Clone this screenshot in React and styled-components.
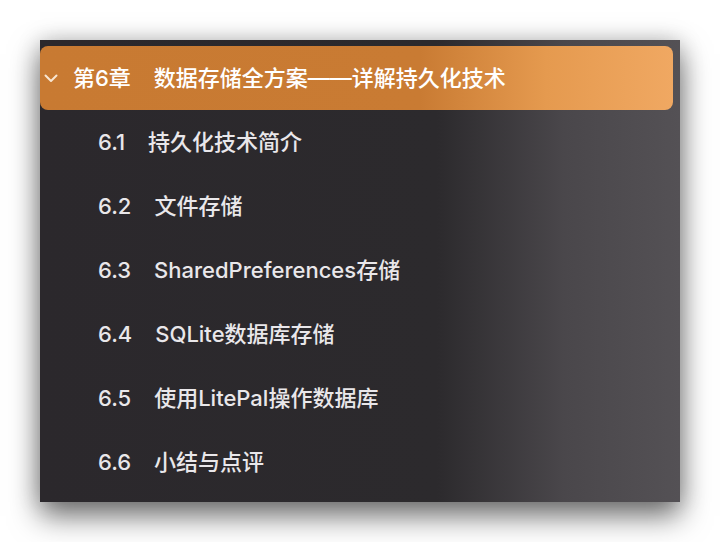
import styled, { createGlobalStyle } from "styled-components";

const GlobalStyle = createGlobalStyle`
  html, body {
    margin: 0;
    padding: 0;
    background: #ffffff;
  }
  body {
    font-family: Inter, "Noto Sans CJK SC", sans-serif;
  }
`;

const Page = styled.div`
  width: 720px;
  height: 542px;
  padding: 40px 0 0 40px;
  box-sizing: border-box;
  overflow: hidden;
`;

const Panel = styled.ul`
  width: 640px;
  margin: 0;
  padding: 6px 7px 8px 0;
  box-sizing: border-box;
  list-style: none;
  background: linear-gradient(
    to right,
    #2b282c 0%,
    #2c2a2d 62%,
    #4a474b 82%,
    #545155 100%
  );
  box-shadow: 0 14px 28px rgba(0, 0, 0, 0.55), 0 0 22px rgba(0, 0, 0, 0.18);
`;

const ChapterRow = styled.li`
  display: flex;
  align-items: center;
  height: 64px;
  padding-left: 4px;
  border-radius: 8px;
  background: linear-gradient(
    to right,
    #c87a32 0%,
    #c97b33 60%,
    #e59a4f 80%,
    #f0a862 100%
  );
  color: #ffffff;
  font-size: 22px;
  font-weight: 500;
`;

const Chevron = styled.svg`
  width: 14px;
  height: 14px;
  margin-right: 15px;
  flex-shrink: 0;
`;

const SectionRow = styled.li`
  display: flex;
  align-items: center;
  height: 64px;
  padding-left: 58px;
  color: #e9e7ea;
  font-size: 22px;
  font-weight: 500;
`;

const Label = styled.div`
  line-height: 30px;
  white-space: nowrap;
`;

const Num = styled.span`
  margin-right: 23px;
`;

const sections = [
  ["6.1", "持久化技术简介"],
  ["6.2", "文件存储"],
  ["6.3", "SharedPreferences存储"],
  ["6.4", "SQLite数据库存储"],
  ["6.5", "使用LitePal操作数据库"],
  ["6.6", "小结与点评"],
];

export default function App() {
  return (
    <>
      <GlobalStyle />
      <Page>
        <Panel>
          <ChapterRow>
            <Chevron viewBox="0 0 14 14" fill="none">
              <path
                d="M1.5 4.5 L7 10 L12.5 4.5"
                stroke="#f8e6d2"
                strokeWidth="2"
                strokeLinecap="round"
                strokeLinejoin="round"
              />
            </Chevron>
            <Label>
              <Num>第6章</Num>
              数据存储全方案——详解持久化技术
            </Label>
          </ChapterRow>
          {sections.map(([num, title]) => (
            <SectionRow key={num}>
              <Label>
                <Num>{num}</Num>
                {title}
              </Label>
            </SectionRow>
          ))}
        </Panel>
      </Page>
    </>
  );
}
